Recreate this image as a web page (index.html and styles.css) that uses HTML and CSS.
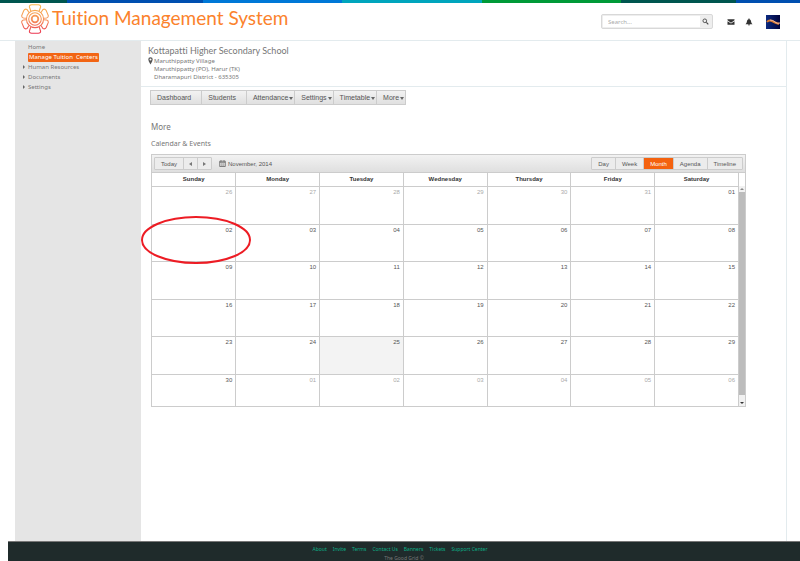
FILE: index.html
```html
<!DOCTYPE html>
<html lang="en">
<head>
<meta charset="utf-8">
<title>Tuition Management System</title>
<link rel="stylesheet" href="styles.css">
</head>
<body>
<div class="stripe"><i></i><i></i><i></i><i></i><i></i><i></i><i></i></div>
<header class="top">
  <div class="brand">
    <svg class="logo" viewBox="0 0 28 30" aria-hidden="true">
      <defs><linearGradient id="g" gradientUnits="userSpaceOnUse" x1="0" y1="0" x2="0" y2="30"><stop offset="0" stop-color="#f9b94c"/><stop offset=".55" stop-color="#f58f5c"/><stop offset="1" stop-color="#ea3150"/></linearGradient></defs>
      <g fill="none" stroke="url(#g)" stroke-width="1.1">
        <circle cx="14" cy="15" r="8.6"/><circle cx="14" cy="15" r="6.3"/><circle cx="14" cy="15" r="3.3" stroke-width="1.8"/>
        <path d="M9.800 7 8.400 3Q8.200.7 10.700.7h6.600q2.500 0 2.300 2.300L18.200 7M9.800 23l-1.400 4q-.2 2.300 2.300 2.300h6.600q2.500 0 2.300-2.300L18.200 23"/>
        <path d="M8 8.500 6 5.500Q4 4.500 2.800 6.600L.8 11.300Q.3 13.500 2.500 14l3.200.2M20 8.500l2-3q2-1 3.200 1.100l2 4.700q.5 2.200-1.700 2.700l-3.200.2M8 21.500l-2 3q-2 1-3.200-1.100L.8 18.700Q.3 16.500 2.500 16l3.200-.2M20 21.500l2 3q2 1 3.200-1.100l2-4.700q.5-2.200-1.700-2.700l-3.200-.2"/>
      </g>
    </svg>
    <h1>Tuition Management System</h1>
  </div>
  <form class="search">
    <input type="search" placeholder="Search..." aria-label="Search">
    <button type="button" aria-label="Search"><svg viewBox="0 0 8 8"><circle cx="3.200" cy="3.200" r="2.100" fill="none" stroke="#444"/><path d="m5 5 2.200 2.200" stroke="#444" stroke-width="1.300"/></svg></button>
  </form>
  <button class="icon" type="button" aria-label="Messages"><svg viewBox="0 0 8 8"><path fill="#333" d="M.5 1.300h7v.9L4 4.700.5 2.200zM.5 3.200 4 5.600l3.500-2.400v3.500h-7z"/></svg></button>
  <button class="icon" type="button" aria-label="Notifications"><svg viewBox="0 0 8 8"><path fill="#333" d="M3.500.5h1v.7Q6 1.600 6.100 3.500 6.200 5.200 7.500 6.200h-7Q1.800 5.200 1.900 3.500 2 1.600 3.500 1.200zM3 6.500h2Q4.800 7.500 4 7.500T3 6.500z"/></svg></button>
  <svg class="avatar" viewBox="0 0 14 14" role="img" aria-label="Profile"><defs><linearGradient id="a" x2="1"><stop stop-color="#0b2a80"/><stop offset="1" stop-color="#02033c"/></linearGradient></defs><path fill="url(#a)" d="M0 0h14v14H0z"/><path d="M1 7q2-2.500 5-1t3 1.500 4 1.500" fill="none" stroke="#d9782f" stroke-width="2"/><path d="M4 5q3 0 5 2t5 1" fill="none" stroke="#eeb8a0"/></svg>
</header>
<div class="page">
  <nav class="side" aria-label="Main">
    <ul>
      <li><a href="#">Home</a></li>
      <li><a class="on" href="#">Manage Tuition&nbsp; Centers</a></li>
      <li class="sub"><a href="#">Human Resources</a></li>
      <li class="sub"><a href="#">Documents</a></li>
      <li class="sub"><a href="#">Settings</a></li>
    </ul>
  </nav>
  <main>
    <section class="school">
      <h2>Kottapatti Higher Secondary School</h2>
      <address>
        <svg viewBox="0 0 5 8" aria-hidden="true"><path fill="#555" fill-rule="evenodd" d="M2.500.3A2.200 2.200 0 0 1 4.700 2.600Q4.700 4 2.500 7.600.3 4 .3 2.600A2.200 2.200 0 0 1 2.500.3zm0 1.200a1 1 0 1 0 0 2 1 1 0 0 0 0-2z"/></svg>
        <p>Maruthippatty Village<br>Maruthippatty (PO), Harur (TK)<br>Dharamapuri District - 635305</p>
      </address>
    </section>
    <section class="content">
      <nav class="tabs" aria-label="Center">
        <button type="button">Dashboard</button><button type="button">Students</button><button type="button" class="drop">Attendance</button><button type="button" class="drop">Settings</button><button type="button" class="drop">Timetable</button><button type="button" class="drop">More</button>
      </nav>
      <h3>More</h3>
      <h4>Calendar &amp; Events</h4>
      <div class="calendar">
        <div class="bar">
          <div class="group step"><button type="button">Today</button><button type="button" class="prev" aria-label="Previous"></button><button type="button" class="next" aria-label="Next"></button></div>
          <svg class="cal" viewBox="0 0 7 7" aria-hidden="true"><path fill="none" stroke="#666" stroke-width=".8" d="M.7 1.200h5.600v5.300H.7zM.7 2.300h5.600M2 .2v1.500M5 .2v1.500"/><path fill="none" stroke="#999" stroke-width=".5" d="M1.500 4h4M1.500 5.300h4M2.700 3v3M4.300 3v3"/></svg>
          <span>November, 2014</span>
          <div class="group views"><button type="button">Day</button><button type="button">Week</button><button type="button" class="on">Month</button><button type="button">Agenda</button><button type="button">Timeline</button></div>
        </div>
        <div class="body">
          <table>
            <thead><tr><th>Sunday</th><th>Monday</th><th>Tuesday</th><th>Wednesday</th><th>Thursday</th><th>Friday</th><th>Saturday</th></tr></thead>
            <tbody>
              <tr><td class="out">26</td><td class="out">27</td><td class="out">28</td><td class="out">29</td><td class="out">30</td><td class="out">31</td><td>01</td></tr>
              <tr><td>02</td><td>03</td><td>04</td><td>05</td><td>06</td><td>07</td><td>08</td></tr>
              <tr><td>09</td><td>10</td><td>11</td><td>12</td><td>13</td><td>14</td><td>15</td></tr>
              <tr><td>16</td><td>17</td><td>18</td><td>19</td><td>20</td><td>21</td><td>22</td></tr>
              <tr><td>23</td><td>24</td><td class="today">25</td><td>26</td><td>27</td><td>28</td><td>29</td></tr>
              <tr><td>30</td><td class="out">01</td><td class="out">02</td><td class="out">03</td><td class="out">04</td><td class="out">05</td><td class="out">06</td></tr>
            </tbody>
          </table>
          <div class="scroll"><i class="up"></i><i class="thumb"></i><i class="down"></i></div>
        </div>
        <svg class="mark" viewBox="0 0 110 48" aria-hidden="true"><ellipse cx="55" cy="24" rx="54" ry="23" fill="none" stroke="#ed1c24" stroke-width="2"/></svg>
      </div>
    </section>
  </main>
</div>
<footer>
  <nav aria-label="Footer"><a href="#">About</a><a href="#">Invite</a><a href="#">Terms</a><a href="#">Contact Us</a><a href="#">Banners</a><a href="#">Tickets</a><a href="#">Support Center</a></nav>
  <p>The Good Grid ©</p>
</footer>
</body>
</html>
```
FILE: styles.css
```css
* { box-sizing: border-box; }
body { margin: 0; min-height: 100vh; display: flex; flex-direction: column; background: #fff; color: #777; font: 6px/10px "Noto Sans", sans-serif; font-variant-ligatures: none; }
h1, h2, h3, h4, p, ul { margin: 0; padding: 0; font-weight: 400; }
button, input { margin: 0; padding: 0; border: 0; background: none; font: inherit; color: inherit; }
svg { display: block; flex: none; }
a { color: inherit; text-decoration: none; }

.stripe { display: grid; grid-template-columns: 67fr 136fr 139fr 140fr 139fr 115fr 64fr; height: 3px; }
.stripe i { background: #00564f; }
.stripe i:nth-child(2), .stripe i:nth-child(7) { background: #004fb0; }
.stripe i:nth-child(3) { background: #0078d7; }
.stripe i:nth-child(4) { background: #00a5bd; }
.stripe i:nth-child(5) { background: #009a38; }

.top { height: 38px; display: flex; align-items: center; padding: 0 20px 0 21px; border-bottom: 1px solid #e3ebee; }
.brand { display: flex; align-items: flex-start; gap: 3px; margin-right: auto; padding-bottom: 6px; }
.logo { width: 28px; height: 30px; }
h1 { color: #fb822c; font-family: Lato, sans-serif; font-size: 19px; line-height: 28px; }
.search { display: flex; width: 112px; height: 15px; margin-right: 14px; padding: 1px; border: 1px solid #d8d8d8; border-radius: 2px; background: #eee; }
.search input { flex: 1; min-width: 0; padding: 0 5px; background: #fff; appearance: none; }
.search input::placeholder { color: #aaa; }
.search button { width: 11px; display: grid; place-items: center; }
.search svg { width: 7px; height: 7px; }
.icon { margin-right: 10px; }
.icon svg { width: 8px; height: 8px; }
.avatar { width: 14px; height: 14px; margin-left: 3px; }

.page { flex: 1; display: flex; padding: 0 13px 0 15px; }
.side { width: 126px; padding: 1px 0 0 13px; background: #e5e5e5; }
.side ul { list-style: none; }
.side li { height: 10px; }
.side a.on { display: inline-block; height: 9px; line-height: 9px; padding: 0 1px; border-radius: 1px; background: #f26514; color: #fff; }
.side .sub::before { content: ""; float: left; margin: 3px 0 0 -5px; border: 2px solid transparent; border-left-color: #666; border-right: 0; }
main { flex: 1; min-width: 0; border-right: 1px solid #e3ebee; }
.school { padding: 4px 7px 5px; border-bottom: 1px solid #e3ebee; }
h2 { font-family: Lato, sans-serif; font-size: 9px; line-height: 12px; }
address { display: flex; gap: 1px; font-style: normal; line-height: 8px; }
address svg { width: 5px; height: 8px; }

.content { padding: 3px 40px 0 9px; }
.tabs { display: inline-flex; border: 1px solid #ccc; background: linear-gradient(#f2f2f2, #e0e0e0); color: #555; font-family: "Liberation Sans", sans-serif; font-size: 7px; }
.tabs button { height: 13px; padding: 0 10px 0 6px; border-right: 1px solid #ccc; }
.tabs button:last-child { border-right: 0; }
.tabs .drop { padding-right: 1px; }
.drop::after { content: ""; display: inline-block; margin-left: 1px; border: 2px solid transparent; border-top: 3px solid #666; border-bottom: 0; }
h3 { margin: 14px 0 0 1px; font-size: 8px; line-height: 16px; }
h4 { margin: 3px 0 4px 1px; font-size: 7px; line-height: 12px; }

.calendar { position: relative; margin-left: 1px; border: 1px solid #ccc; color: #555; font-family: "Liberation Sans", sans-serif; }
.bar { display: flex; align-items: center; height: 18px; padding: 0 2px; background: linear-gradient(#f2f2f2, #dfdfdf); border-bottom: 1px solid #ccc; }
.group { display: flex; height: 13px; border: 1px solid #ccc; border-radius: 1px; background: #ececec; }
.group button { padding: 0 6px; border-right: 1px solid #ccc; }
.group button:last-child { border-right: 0; }
.group .on { background: #f4620f; color: #fff; }
.group .prev, .group .next { padding: 0 5px; }
.prev::before, .next::before { content: ""; display: block; border: 2px solid transparent; }
.prev::before { border-right: 3px solid #777; border-left: 0; }
.next::before { border-left: 3px solid #777; border-right: 0; }
.cal { width: 7px; height: 7px; margin: 0 2px 0 7px; }
.views { margin-left: auto; }
.body { display: flex; }
table { flex: 1; border-collapse: collapse; table-layout: fixed; width: 100%; }
th, td { padding: 0; border-right: 1px solid #ccc; border-bottom: 1px solid #ccc; }
th { height: 13px; line-height: 8px; color: #333; }
td { height: 38px; padding: 0 3px; vertical-align: top; text-align: right; }
tr:nth-child(even) td { height: 37px; }
tr:last-child td { height: 32px; border-bottom: 0; }
.out { color: #aaa; }
.today { background: #f3f3f3; }
.scroll { width: 6px; margin-top: 13px; padding: 2px 0; display: flex; flex-direction: column; align-items: center; gap: 2px; background: #f1f1f1; }
.thumb { flex: 1; width: 6px; background: #bcbcbc; }
.up, .down { border: 2px solid transparent; }
.up { border-top: 0; border-bottom-color: #888; }
.down { margin-top: 5px; border-bottom: 0; border-top-color: #333; }
.mark { position: absolute; left: -11px; top: 61px; width: 110px; height: 48px; }

footer { margin-left: 8px; padding-top: 3px; height: 20px; overflow: hidden; border-top: 1px solid #777; background: #1f2b2b; text-align: center; font-size: 5px; line-height: 9px; }
footer nav { display: flex; justify-content: center; gap: 6px; padding-right: 8px; color: #0cae87; }
```
